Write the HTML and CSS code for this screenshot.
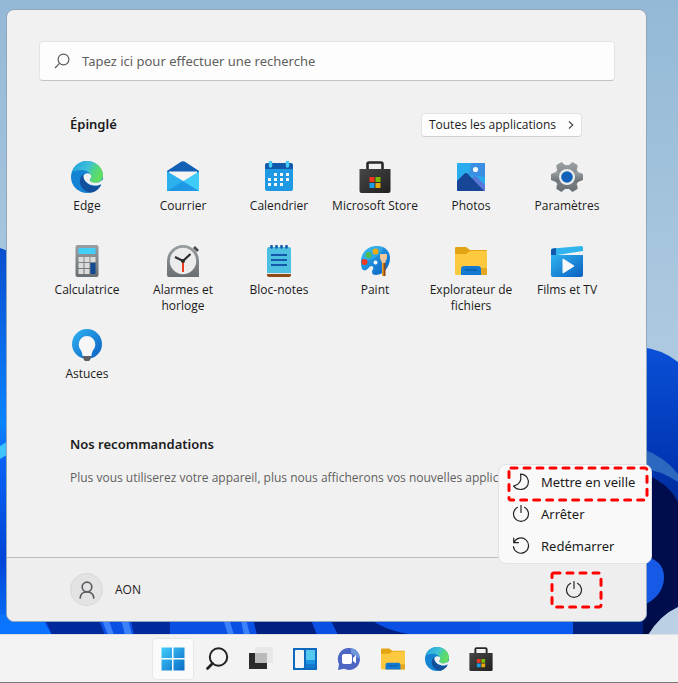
FILE: index.html
```
<!DOCTYPE html>
<html lang="fr">
<head>
    <meta charset="UTF-8">
    <meta name="viewport" content="width=device-width, initial-scale=1.0">
    <title>Menu Démarrer</title>
    <link rel="stylesheet" href="styles.css">
</head>
<body>
    <!-- icônes partagées par le menu et la barre des tâches -->
    <svg class="sprite" aria-hidden="true">
        <defs>
            <linearGradient id="g-edge" x1="0" y1="0" x2="1" y2="0.4">
                <stop offset="0" stop-color="#1f9fe0"/>
                <stop offset="0.55" stop-color="#3fc0d8"/>
                <stop offset="0.75" stop-color="#4fd488"/>
                <stop offset="1" stop-color="#62de62"/>
            </linearGradient>
            <linearGradient id="g-blue" x1="0" y1="0" x2="1" y2="1">
                <stop offset="0" stop-color="#2fb4f2"/>
                <stop offset="1" stop-color="#0b5fc0"/>
            </linearGradient>
            <linearGradient id="g-bag" x1="0" y1="0" x2="1" y2="1">
                <stop offset="0" stop-color="#484848"/>
                <stop offset="1" stop-color="#202020"/>
            </linearGradient>
            <linearGradient id="g-grey" x1="0" y1="0" x2="0" y2="1">
                <stop offset="0" stop-color="#9a9fa2"/>
                <stop offset="1" stop-color="#686e72"/>
            </linearGradient>
            <linearGradient id="g-win" x1="0" y1="0" x2="1" y2="1">
                <stop offset="0" stop-color="#40ccfa"/>
                <stop offset="1" stop-color="#0a6cc8"/>
            </linearGradient>
        </defs>
        <symbol id="i-edge" viewBox="0 0 32 32">
            <circle cx="16" cy="16" r="16" fill="#1583d3"/>
            <path d="M1 11C3 4 9 0 16 0c9 0 16 6.500 16 14 0 5-3.500 8-8 8-4 0-6-1.500-5-3 1-1.500 1-2 1-3 0-4-4-7-9-7-4 0-8 1-10 2z" fill="url(#g-edge)"/>
            <path d="M12 13c-3 3-4 8-2 12 2 4 7 7 11 6.500 4-1 7.500-4 9-7.500 0-.6-.5-.6-1-.3-2 1-4 1.300-6 1.300-6 0-11-6-11-12z" fill="#124f9c"/>
            <path d="M31.500 22L34 26l-5 4c1-2 1.500-4 1.500-6z" fill="#f1f1f1"/>
            <path d="M12.500 15c1-3 4.500-3.500 6.500-2 1.500 1.300 1.500 3 .5 4.500s-1 2.500 1 3.500c3 1.500 7 1 9.500-1l3-2v4.500l-3 .8c-2 1.200-4.500 1.500-7 1.200-6-.7-10.500-4.500-10.500-9.500z" fill="#f1f1f1"/>
        </symbol>
        <symbol id="i-store" viewBox="0 0 32 32">
            <path d="M8.500 9V3q0-1.500 1.500-1.500h12Q23.500 1.500 23.500 3v6" fill="none" stroke="#29292b" stroke-width="2.600"/>
            <path d="M.5 8h31v22q0 2-2 2h-27q-2 0-2-2z" fill="url(#g-bag)"/>
            <path fill="#f0361d" d="M10.500 16h5v5h-5z"/>
            <path fill="#7fba00" d="M16.500 16h5v5h-5z"/>
            <path fill="#1c9de8" d="M10.500 22h5v5h-5z"/>
            <path fill="#eaa910" d="M16.500 22h5v5h-5z"/>
        </symbol>
        <symbol id="i-folder" viewBox="0 0 32 32">
            <path d="M0 3q0-1 1-1h10l4 3h16q1 0 1 1v10H0z" fill="#e3a413"/>
            <path d="M0 9h11l4-3h17v23q0 1-1 1H1q-1 0-1-1z" fill="#fdc93f"/>
            <path d="M26 23h6v7h-6z" fill="#e3a820"/>
            <path d="M6 30v-6q0-3 3-3h14q3 0 3 3v6z" fill="#1279d2"/>
            <path d="M10 25h12" stroke="#0b4f93" stroke-width="1"/>
        </symbol>
        <symbol id="i-power" viewBox="0 0 18 18">
            <path d="M5.500 2.300a7.500 7.500 0 1 0 7 0M9 .5v7" fill="none" stroke="#252525" stroke-width="1.200" stroke-linecap="round"/>
        </symbol>
    </svg>

    <div class="desktop">
        <!-- fond d'écran -->
        <svg class="wallpaper" viewBox="0 0 678 683" preserveAspectRatio="none" aria-hidden="true">
            <defs>
                <linearGradient id="g-sky" x1="0" y1="0" x2="0" y2="1">
                    <stop offset="0" stop-color="#94b9d6"/>
                    <stop offset="0.5" stop-color="#adc9e0"/>
                    <stop offset="1" stop-color="#bfd2e6"/>
                </linearGradient>
                <linearGradient id="g-petal" x1="0" y1="0" x2="0" y2="1">
                    <stop offset="0" stop-color="#0a50d8"/>
                    <stop offset="0.4" stop-color="#0036b4"/>
                    <stop offset="1" stop-color="#000a40"/>
                </linearGradient>
                <linearGradient id="g-left" x1="0" y1="0" x2="0" y2="1">
                    <stop offset="0" stop-color="#0a4fd0"/>
                    <stop offset="0.45" stop-color="#0a84ff"/>
                    <stop offset="0.55" stop-color="#0a62f4"/>
                    <stop offset="0.8" stop-color="#0046d8"/>
                    <stop offset="1" stop-color="#0a78ff"/>
                </linearGradient>
            </defs>
            <rect width="678" height="683" fill="url(#g-sky)"/>
            <path d="M0 248q20 6 30 20v370H0z" fill="url(#g-left)"/>
            <path d="M0 446l10-6v13l-10 6z" fill="#3cc4fb"/>
            <path d="M0 615h500v20H0z" fill="#0a50e4"/>
            <path d="M0 615h40l12 20H0z" fill="#0a74ff"/>
            <path d="M43 615h54l8 20H52zM130 615h40v20h-36z" fill="#002a9c"/>
            <path d="M100 615l8 20h6l-7-20zM120 615l5 20h7l-5-20zM222 615l6 20h6l-6-20zM240 615l4 20h6l-5-20z" fill="#3c80fa"/>
            <path d="M252 615l5 20h60l-8-20zM328 615l10 20h76q-30-4-50-20z" fill="#001f80"/>
            <path d="M640 347q22 2 38 15v245q-18 8-30 28H480l60-20 100-15z" fill="url(#g-petal)"/>
            <path d="M640 448q24 8 38 26v8q-18-12-38-14z" fill="#2c68c0"/>
            <path d="M640 472q28 10 38 30v100l-38 25z" fill="#000d4c"/>
            <path d="M640 555q24 4 24 22 0 20-24 30z" fill="#1559e6"/>
            <path d="M480 615h110l-14 20h-96z" fill="#0a5af0"/>
            <path d="M573 615h70v20h-70z" fill="#00227e"/>
        </svg>

        <main class="start-menu">
            <div class="content">
                <form class="search">
                    <label for="q" aria-label="Rechercher">
                        <svg width="16" height="16" viewBox="0 0 16 16"><g fill="none" stroke="#5c5c5c" stroke-width="1.200"><circle cx="9.500" cy="6.500" r="5.400"/><path d="M5.500 10.300L1 15"/></g></svg>
                    </label>
                    <input type="text" id="q" placeholder="Tapez ici pour effectuer une recherche">
                </form>

                <div class="section-head">
                    <h2>Épinglé</h2>
                    <button type="button" class="all-apps">
                        Toutes les applications
                        <svg width="6" height="8" viewBox="0 0 6 8"><path d="M1 .5L4.800 4 1 7.500" fill="none" stroke="#444" stroke-width="1.100"/></svg>
                    </button>
                </div>

                <div class="pinned">
                    <button type="button" class="app">
                        <svg><use href="#i-edge"/></svg>
                        <span>Edge</span>
                    </button>
                    <button type="button" class="app">
                        <svg viewBox="0 0 32 32">
                            <path d="M0 10L14 .8q2-1.200 4 0L32 10v4H0z" fill="#1160b4"/>
                            <path d="M2 10.500h28v10H2z" fill="#f7f5f3"/>
                            <path d="M32 10.500V30H0z" fill="#3fcbf8"/>
                            <path d="M0 10.500L32 30H0z" fill="#1e98e4"/>
                            <path d="M0 10.500L16 20 5 27 0 30z" fill="#2cb0ee"/>
                        </svg>
                        <span>Courrier</span>
                    </button>
                    <button type="button" class="app">
                        <svg viewBox="0 0 32 32">
                            <path d="M2 8h28v20q0 2-2 2H4q-2 0-2-2z" fill="#2099e4"/>
                            <path d="M2 8V4q0-2 2-2h24q2 0 2 2v4z" fill="#1259ac"/>
                            <path d="M7.500 1v4M24.500 1v4" stroke="#45cdf8" stroke-width="3.400" stroke-linecap="round"/>
                            <path d="M11 13.500h15M5 18.500h21M5 23.500h15" stroke="#f7f7f7" stroke-width="3" stroke-dasharray="3 3"/>
                        </svg>
                        <span>Calendrier</span>
                    </button>
                    <button type="button" class="app">
                        <svg><use href="#i-store"/></svg>
                        <span>Microsoft Store</span>
                    </button>
                    <button type="button" class="app">
                        <svg viewBox="0 0 32 32">
                            <rect x="2" y="2" width="28" height="28" rx="1" fill="#28acee"/>
                            <path d="M16 2h14v14L14 14z" fill="#3b8fe2"/>
                            <path d="M13 22l5-6q2-2 4 0l8 8v6H13z" fill="#5878d8"/>
                            <path d="M2 20l7-7q2-2 4 0l16 17H3q-1 0-1-1z" fill="#164695"/>
                            <circle cx="20.500" cy="8.500" r="2.600" fill="#f4f8fc"/>
                        </svg>
                        <span>Photos</span>
                    </button>
                    <button type="button" class="app">
                        <svg viewBox="0 0 32 32">
                            <g fill="url(#g-grey)">
                                <circle cx="16" cy="16" r="12"/>
                                <path d="M0 13l5-2h22l5 2v6l-5 2H5l-5-2z"/>
                                <path d="M5.500 4L10.500 1l4 3.500L26.500 25l0 3-5 3-4-3.500L5.500 7z"/>
                                <path d="M26.500 4l-5-3-4 3.500L5.500 25v3l5 3 4-3.500L26.500 7z"/>
                            </g>
                            <circle cx="16" cy="16" r="8" fill="#eceded"/>
                            <circle cx="16" cy="16" r="5.800" fill="#1261b8"/>
                        </svg>
                        <span>Paramètres</span>
                    </button>
                    <button type="button" class="app">
                        <svg viewBox="0 0 32 32">
                            <rect x="4.500" width="23" height="32" rx="2" fill="url(#g-grey)"/>
                            <path d="M7.500 3h17v6h-17z" fill="#43cffc"/>
                            <path d="M7.500 12h5v5h-5zM13.500 12h5v5h-5zM19.500 12h5v5h-5zM7.500 18h5v5h-5zM13.500 18h5v5h-5zM7.500 24h5v5h-5zM13.500 24h5v5h-5z" fill="#dcdcdc"/>
                            <path d="M19.500 18h5v11h-5z" fill="#124a94"/>
                        </svg>
                        <span>Calculatrice</span>
                    </button>
                    <button type="button" class="app">
                        <svg viewBox="0 0 32 32">
                            <path d="M0 16A16 16 0 0 1 32 16v16H2q-2 0-2-2z" fill="url(#g-grey)"/>
                            <path d="M27 2l4 4" stroke="#4a4d50" stroke-width="3"/>
                            <circle cx="16" cy="16" r="13.200" fill="#ececec"/>
                            <path d="M16 16v11" stroke="#ee3a1c" stroke-width="2"/>
                            <path d="M8 12l8 4 7.500-7" fill="none" stroke="#2c2c2c" stroke-width="2.200"/>
                            <circle cx="16" cy="16" r="2" fill="#2c2c2c"/>
                        </svg>
                        <span>Alarmes et horloge</span>
                    </button>
                    <button type="button" class="app">
                        <svg viewBox="0 0 32 32">
                            <path d="M4 26h24v4q0 2-2 2H6q-2 0-2-2z" fill="#8c4a16"/>
                            <path d="M4 26h24v3H4z" fill="#e6e6e6"/>
                            <path d="M4 4q0-2 2-2h20q2 0 2 2v24H4z" fill="#4dc0e2"/>
                            <path d="M8 10h16M8 15h16M8 20h16" stroke="#1259ac" stroke-width="1.800"/>
                            <path d="M8.500 1v1.500M13.500 1v1.500M18.500 1v1.500M23.500 1v1.500" stroke="#155cac" stroke-width="2.600" stroke-linecap="round"/>
                        </svg>
                        <span>Bloc-notes</span>
                    </button>
                    <button type="button" class="app">
                        <svg viewBox="0 0 32 32">
                            <path d="M18 1c8 0 13 5 13 12 0 8-6 17-14 17-3 0-4-1-4-3s2-3 1-5-3-1-4.500 1C7 26 5 26 3 24-1 12 6 1 18 1z" fill="url(#g-blue)"/>
                            <path d="M18 1c-9 0-15 6-16 13 7 4 20-2 22-12z" fill="#3cc0f0" opacity="0.500"/>
                            <circle cx="5.500" cy="17" r="3" fill="#ee3a22"/>
                            <circle cx="9.500" cy="10" r="3" fill="#4ebc50"/>
                            <circle cx="16.500" cy="6.500" r="3" fill="#eeaa12"/>
                            <circle cx="16.500" cy="17.500" r="2" fill="#f4f8fa"/>
                            <path d="M23 18h3.500v13H23z" fill="#8c4a16"/>
                            <path d="M23 18h1.500v13H23z" fill="#f0a32a"/>
                            <path d="M21 9h7v4l-2 5h-3l-2-5z" fill="#f0c69a"/>
                        </svg>
                        <span>Paint</span>
                    </button>
                    <button type="button" class="app">
                        <svg><use href="#i-folder"/></svg>
                        <span>Explorateur de fichiers</span>
                    </button>
                    <button type="button" class="app">
                        <svg viewBox="0 0 32 32">
                            <path d="M0 5.500q0-1.500 2-2L30.500 1Q32 1 32 2.500V6L6 10H0z" fill="#30b4ee"/>
                            <path d="M0 5.500q0-2 2-2l3-.5v7H0z" fill="#1259ac"/>
                            <path d="M0 10h32v20q0 2-2 2H2q-2 0-2-2z" fill="url(#g-blue)"/>
                            <path d="M12 14v14l11-7z" fill="#f6f8fa" stroke="#f6f8fa" stroke-linejoin="round"/>
                        </svg>
                        <span>Films et TV</span>
                    </button>
                    <button type="button" class="app">
                        <svg viewBox="0 0 32 32">
                            <circle cx="16" cy="15" r="15" fill="url(#g-blue)"/>
                            <path d="M16 7a8.300 8.300 0 0 1 8.300 8.300c0 5-3.800 6-3.800 11.700h-9c0-5.700-3.800-6.700-3.800-11.700A8.300 8.300 0 0 1 16 7z" fill="#f6f6f6"/>
                            <path d="M11.500 27h9l-1.500 4q-.5 1-1.500 1h-3q-1 0-1.500-1z" fill="#5c6064"/>
                        </svg>
                        <span>Astuces</span>
                    </button>
                </div>

                <section class="recommended">
                    <h2>Nos recommandations</h2>
                    <p>Plus vous utiliserez votre appareil, plus nous afficherons vos nouvelles applications.</p>
                </section>
            </div>

            <footer class="user-bar">
                <button type="button" class="user">
                    <span class="avatar">
                        <svg width="16" height="18" viewBox="0 0 16 18"><g fill="none" stroke="#5b5f63" stroke-width="1.700" stroke-linecap="round"><circle cx="8" cy="6" r="4.800"/><path d="M1.200 17C1.200 8.800 14.800 8.800 14.800 17"/></g></svg>
                    </span>
                    AON
                </button>
                <div class="power">
                    <button type="button" class="power-btn marked" aria-label="Marche/Arrêt">
                        <svg width="18" height="18"><use href="#i-power"/></svg>
                        <svg class="mark"><rect x="2" y="2" rx="2"/></svg>
                    </button>
                    <div class="power-menu">
                        <button type="button" class="marked">
                            <svg width="18" height="18" viewBox="0 0 18 18"><path d="M8.500 1.200C15 1.500 17.500 7 16 11.500 14 17 6 18.500 1.500 13.200 7 12 10 8 8.500 1.200z" fill="none" stroke="#252525" stroke-width="1.200" stroke-linejoin="round"/></svg>
                            Mettre en veille
                            <svg class="mark"><rect x="2" y="2" rx="2"/></svg>
                        </button>
                        <button type="button">
                            <svg width="18" height="18"><use href="#i-power"/></svg>
                            Arrêter
                        </button>
                        <button type="button">
                            <svg width="18" height="18" viewBox="0 0 18 18"><path d="M1.700 1v4.700h4.700M2 5.500A7.600 7.600 0 1 1 1.400 9.500" fill="none" stroke="#252525" stroke-width="1.200" stroke-linecap="round"/></svg>
                            Redémarrer
                        </button>
                    </div>
                </div>
            </footer>
        </main>

        <nav class="taskbar" aria-label="Barre des tâches">
            <button type="button" class="active" aria-label="Démarrer">
                <svg viewBox="0 0 24 24"><path d="M.5.5H11V11H.5zM12.500.5h11V11h-11zM.5 12.500H11v11H.5zM12.500 12.500h11v11h-11z" fill="url(#g-win)"/></svg>
            </button>
            <button type="button" aria-label="Rechercher">
                <svg viewBox="0 0 24 24"><g fill="none" stroke="#222"><circle cx="13.500" cy="10" r="8.700" stroke-width="2"/><path d="M7.500 16.500L2.500 21.500" stroke-width="2.800" stroke-linecap="round"/></g></svg>
            </button>
            <button type="button" aria-label="Vue des tâches">
                <svg viewBox="0 0 24 24"><path d="M0 6h18v16H0z" fill="#2b2b2b"/><path d="M6 0h18v16H6z" fill="#e8e8e8"/><path d="M6 6h12v10H6z" fill="#bababa"/></svg>
            </button>
            <button type="button" aria-label="Widgets">
                <svg viewBox="0 0 24 24"><path d="M0 1h24v22H0z" fill="#0f69bd"/><rect x="2" y="3" width="9" height="18" rx="1" fill="#f4f6f8"/><path d="M13 3h9v10h-9z" fill="#55c8ee"/><path d="M13 13h9v4h-9z" fill="#1c94e2"/><path d="M13 17h9v4h-9z" fill="#1478cc"/></svg>
            </button>
            <button type="button" aria-label="Conversation">
                <svg viewBox="0 0 24 24"><path d="M12 1a11 11 0 1 1-5 20.800L1 23l1-6A11 11 0 0 1 12 1z" fill="#4d66c4"/><path d="M14 1a11 11 0 0 1 9 11q-4-2-9-6z" fill="#6e98dc"/><rect x="5" y="7" width="10" height="10" rx="2" fill="#fff"/><path d="M16 11l3-3v8.500L16 14z" fill="#fff"/></svg>
            </button>
            <button type="button" aria-label="Explorateur de fichiers">
                <svg><use href="#i-folder"/></svg>
            </button>
            <button type="button" aria-label="Edge">
                <svg><use href="#i-edge"/></svg>
            </button>
            <button type="button" aria-label="Microsoft Store">
                <svg><use href="#i-store"/></svg>
            </button>
        </nav>
    </div>
</body>
</html>
```

FILE: styles.css
```
* {
    margin: 0;
    padding: 0;
    box-sizing: border-box;
}

body {
    font-family: "Open Sans", "Noto Sans", sans-serif;
    font-size: 12px;
    line-height: 16px;
    color: #1b1b1b;
}

button,
input {
    font: inherit;
    color: inherit;
    border: none;
    background: none;
}

svg {
    display: block;
    flex: none;
}

h2 {
    font-family: "Noto Sans", sans-serif;
    font-size: 13px;
    font-weight: 600;
    line-height: 22px;
}

.sprite {
    position: absolute;
    width: 0;
    height: 0;
}

.desktop {
    position: relative;
    display: flex;
    flex-direction: column;
    min-height: 100vh;
    background: #a5c5de;
}

.wallpaper {
    position: absolute;
    width: 100%;
    height: 100%;
}

/* menu */
.start-menu {
    position: relative;
    display: flex;
    flex: 1;
    flex-direction: column;
    margin: 9px 31px 12px 6px;
    border: 1px solid #8fa6bc;
    border-radius: 8px;
    background: #f1f1f1;
}

.content {
    flex: 1;
    padding: 31px 31px 0 32px;
}

.search {
    display: flex;
    align-items: center;
    gap: 12px;
    height: 40px;
    padding: 0 14px;
    border: 1px solid #e4e4e4;
    border-bottom-color: #c4c4c4;
    border-radius: 4px;
    background: #fdfdfd;
}

.search input {
    flex: 1;
    min-width: 0;
    font-family: "Noto Sans", sans-serif;
    font-size: 13px;
    outline: none;
}

.search input::placeholder {
    color: #5f5f5f;
    opacity: 1;
}

.section-head {
    display: flex;
    align-items: flex-start;
    justify-content: space-between;
    margin: 32px 33px 20px 31px;
}

.all-apps {
    display: flex;
    align-items: center;
    gap: 12px;
    height: 24px;
    padding: 0 7px;
    border: 1px solid #e2e2e2;
    border-bottom-color: #cfcfcf;
    border-radius: 4px;
    background: #fdfdfd;
}

.pinned {
    display: grid;
    grid-template-columns: repeat(6, 1fr);
    grid-auto-rows: 84px;
}

.app {
    display: flex;
    flex-direction: column;
    align-items: center;
    gap: 5px;
    padding-top: 4px;
}

.app svg {
    width: 32px;
    height: 32px;
}

.recommended {
    padding: 24px 31px;
}

.recommended p {
    margin-top: 15px;
    white-space: nowrap;
    color: #5f5f5f;
}

.user-bar {
    display: flex;
    align-items: center;
    justify-content: space-between;
    height: 64px;
    padding: 0 43px 0 63px;
    border-top: 1px solid #bdbdbd;
    border-radius: 0 0 8px 8px;
    background: #eee;
}

.user {
    display: flex;
    align-items: center;
    gap: 12px;
}

.avatar {
    display: flex;
    align-items: center;
    justify-content: center;
    width: 33px;
    height: 33px;
    border: 1px solid #d8d8d8;
    border-radius: 50%;
    background: #e3e3e3;
}

.power {
    position: relative;
}

.power-btn {
    display: flex;
    align-items: center;
    justify-content: center;
    width: 53px;
    height: 38px;
    padding-right: 6px;
}

.power-menu {
    position: absolute;
    right: -49px;
    bottom: 45px;
    width: 154px;
    padding: 1px 2px 1px 8px;
    border: 1px solid #dfe2e6;
    border-radius: 8px;
    background: #f9f9f9;
}

.power-menu button {
    display: flex;
    align-items: center;
    gap: 11px;
    width: 100%;
    height: 32px;
    padding-left: 5px;
    font-family: "Noto Sans", sans-serif;
    font-size: 13px;
    white-space: nowrap;
}

/* cadres rouges en pointillés */
.marked {
    position: relative;
}

.mark {
    position: absolute;
    top: 0;
    left: 0;
    width: 100%;
    height: 100%;
    overflow: visible;
}

.mark rect {
    width: calc(100% - 4px);
    height: calc(100% - 4px);
    fill: none;
    stroke: #f00;
    stroke-width: 3px;
    stroke-linecap: round;
    stroke-dasharray: 6 7;
}

.power-menu .mark {
    height: 36px;
}

/* barre des tâches */
.taskbar {
    position: relative;
    display: flex;
    align-items: center;
    justify-content: center;
    gap: 4px;
    height: 49px;
    padding-right: 25px;
    border-top: 1px solid #dcdfe4;
    border-bottom: 1px solid #777;
    background: #f3f3f3;
}

.taskbar button {
    display: flex;
    align-items: center;
    justify-content: center;
    width: 40px;
    height: 40px;
    border-radius: 4px;
}

.taskbar .active {
    background: #fbfbfb;
    box-shadow: 0 0 1px 1px #e6e6e6;
}

.taskbar svg {
    width: 24px;
    height: 24px;
}
```
